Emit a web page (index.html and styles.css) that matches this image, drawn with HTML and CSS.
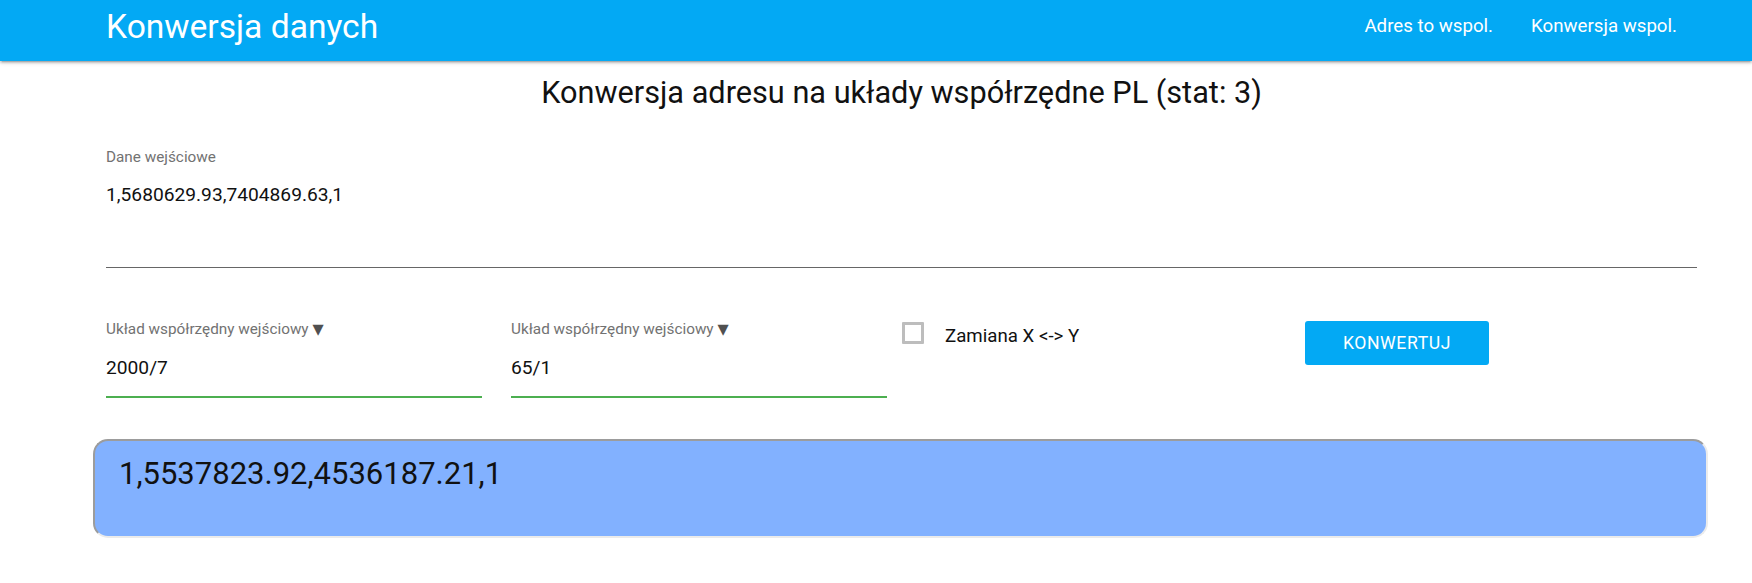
FILE: index.html
```html
<!DOCTYPE html>
<html lang="pl">
<head>
<meta charset="utf-8">
<title>Konwersja danych</title>
<link rel="stylesheet" href="styles.css">
</head>
<body>
<header class="nav">
  <div class="nav-inner">
    <a class="brand" href="#">Konwersja danych</a>
    <ul class="menu">
      <li><a href="#">Adres to wspol.</a></li>
      <li><a href="#">Konwersja wspol.</a></li>
    </ul>
  </div>
</header>
<main class="container">
  <h1 class="title">Konwersja adresu na układy współrzędne PL (stat: 3)</h1>
  <div class="area">
    <label class="field-label">Dane wejściowe</label>
    <div class="area-value">1,5680629.93,7404869.63,1</div>
  </div>
  <div class="row">
    <div class="col col-pad">
      <div class="select">
        <label class="field-label">Układ współrzędny wejściowy <span class="tri">▼</span></label>
        <div class="select-value">2000/7</div>
      </div>
    </div>
    <div class="col col-pad">
      <div class="select">
        <label class="field-label">Układ współrzędny wejściowy <span class="tri">▼</span></label>
        <div class="select-value">65/1</div>
      </div>
    </div>
    <div class="col">
      <label class="check"><span class="box"></span><span class="check-text">Zamiana X &lt;-&gt; Y</span></label>
    </div>
    <div class="col">
      <a class="btn" href="#">KONWERTUJ</a>
    </div>
  </div>
  <div class="result">1,5537823.92,4536187.21,1</div>
</main>
</body>
</html>
```

FILE: styles.css
```css
* { box-sizing: border-box; }
html, body { margin: 0; padding: 0; background: #fff; }
body {
  font-family: Roboto, "Liberation Sans", Arial, sans-serif;
  color: rgba(0,0,0,0.87);
}
a { text-decoration: none; color: inherit; }

.nav {
  height: 61px;
  background: #03a9f4;
  color: #fff;
  box-shadow: 0 2px 2px 0 rgba(0,0,0,0.14), 0 3px 1px -2px rgba(0,0,0,0.12), 0 1px 5px 0 rgba(0,0,0,0.2);
  position: relative;
  z-index: 2;
}
.nav-inner {
  display: flex;
  justify-content: space-between;
  align-items: flex-start;
  padding: 0 56px 0 106px;
  height: 61px;
}
.brand {
  font-size: 33.6px;
  line-height: 53px;
  color: #fff;
}
.menu {
  list-style: none;
  display: flex;
  margin: 0;
  padding: 0;
}
.menu a {
  display: block;
  padding: 0 19px;
  font-size: 18.7px;
  line-height: 53px;
  color: #fff;
}

.container {
  margin-left: 91.5px;
  width: 1620px;
}
.title {
  margin: 13.5px 14.5px 0;
  font-size: 30.7px;
  font-weight: 400;
  line-height: 36px;
  text-align: center;
  color: #111;
}
.area {
  margin: 37px 14.5px 0;
  padding-bottom: 61.5px;
  border-bottom: 1px solid #666;
}
.field-label {
  display: block;
  font-size: 15.3px;
  line-height: 18px;
  color: #727272;
}
.tri {
  font-family: "DejaVu Sans", sans-serif;
  font-size: 14.5px;
  line-height: 1;
  color: #505050;
}
.area-value {
  margin-top: 17px;
  font-size: 19.2px;
  line-height: 23px;
  color: #111;
}

.row {
  margin-top: 52px;
  display: grid;
  grid-template-columns: repeat(4, 405px);
  align-items: start;
}
.col-pad { padding: 0 14.5px; }
.select {
  padding-bottom: 17px;
  border-bottom: 1px solid #4caf50;
  box-shadow: 0 1px 0 0 #4caf50;
}
.select-value {
  margin-top: 18px;
  font-size: 19.2px;
  line-height: 23px;
  color: #111;
}
.check {
  display: flex;
  align-items: flex-start;
  margin-top: 2px;
  margin-left: 0.5px;
}
.box {
  width: 22px;
  height: 22px;
  border: 3px solid #bdbdbd;
  border-radius: 1px;
  flex: none;
}
.check-text {
  margin-left: 21px;
  margin-top: -1px;
  font-size: 18.7px;
  line-height: 30px;
  color: #111;
}
.btn {
  display: block;
  margin-left: -1.5px;
  margin-top: 1px;
  width: 184px;
  height: 44px;
  line-height: 44px;
  text-align: center;
  background: #03a9f4;
  color: #fff;
  border-radius: 3px;
  font-size: 17.6px;
  letter-spacing: 0.6px;
}

.result {
  margin: 42px 3.5px 0 1.5px;
  height: 99px;
  padding: 14.5px 24px;
  background: #82b1ff;
  border-style: solid;
  border-width: 2px;
  border-color: #9c9c9c #ebebeb #ebebeb #9c9c9c;
  border-radius: 15px;
  font-size: 31px;
  line-height: 36px;
  color: #111;
}
```
